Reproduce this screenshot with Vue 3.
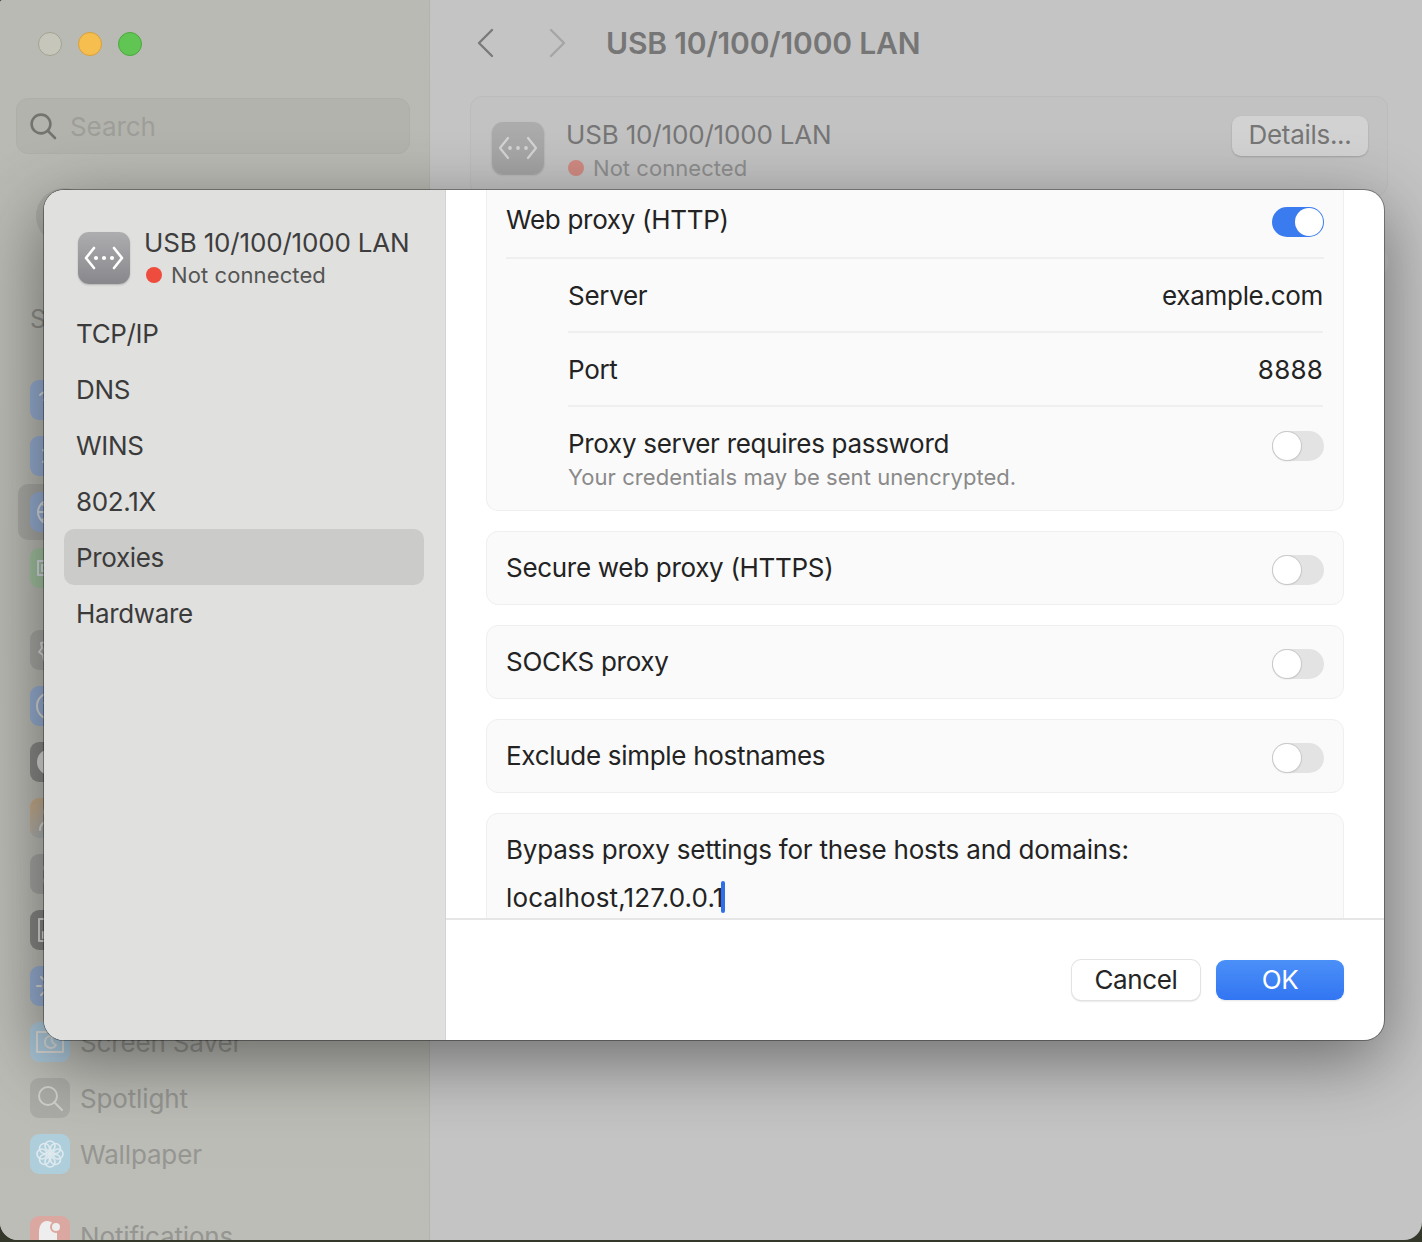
<script setup>
const group1 = [
  { label: 'Wi-Fi', color: '#94abce', d: 'M10 15a14 14 0 0 1 20 0M14 20a8 8 0 0 1 12 0M18 26a3 3 0 0 1 4 0' },
  { label: 'Bluetooth', color: '#94abce', d: 'M13 14l14 12-7 7V7l7 7-14 12' },
  { label: 'Network', color: '#94abce', selected: true, d: 'M8 20a12 12 0 1 0 24 0a12 12 0 1 0-24 0M14 10c5 6 5 14 0 20M8 20h24M12 12c6 4 12 4 16 0M12 28c6-4 12-4 16 0' },
  { label: 'VPN', color: '#a0bf9e', d: 'M8 13h24v14H8zM12 17h6v6h-6z' },
]
const group2 = [
  { label: 'General', color: '#a5a5a2', d: 'M20 8l3 3 5-1 1 5 4 3-3 4 1 5-5 1-3 4-4-3-5 1-1-5-4-3 3-4-1-5 5-1zM14 20a6 6 0 1 0 12 0a6 6 0 1 0-12 0' },
  { label: 'Accessibility', color: '#94abce', d: 'M7 20a13 13 0 1 0 26 0a13 13 0 1 0-26 0M14 17h12M20 17v6l-4 6M20 23l4 6' },
  { label: 'Appearance', color: '#878785', d: 'M8 20a12 12 0 1 0 24 0a12 12 0 1 0-24 0', fill: '#d8d8d6' },
  { label: 'Siri', color: '#b9ab94', grad: true, d: 'M14 14a5 5 0 1 0 10 0a5 5 0 1 0-10 0M10 32c0-12 18-12 18 0' },
  { label: 'Control Centre', color: '#a3a3a1', d: 'M14 14a5 5 0 1 0 10 0a5 5 0 1 0-10 0M14 27a5 5 0 1 0 10 0a5 5 0 1 0-10 0', fill: '#c8c8c6' },
  { label: 'Desktop', color: '#858583', d: 'M9 9h22v22H9zM13 22h7v6h-7z' },
  { label: 'Displays', color: '#94abce', d: 'M14 20a6 6 0 1 0 12 0a6 6 0 1 0-12 0M20 7v4M11 11l3 3M7 20h4M11 29l3-3' },
  { label: 'Screen Saver', color: '#a8c4d6', d: 'M7 10h26v20H7zM22 14a6 6 0 1 0 4 9a7 7 0 0 1-4-9' },
  { label: 'Spotlight', color: '#aaaaa7', stroke: '#cfcfcb', d: 'M9 18a9 9 0 1 0 18 0a9 9 0 1 0-18 0M24 24l8 8' },
  { label: 'Wallpaper', color: '#afcedb', petals: true },
]
const navItems = ['TCP/IP', 'DNS', 'WINS', '802.1X', 'Proxies', 'Hardware']
const simpleRows = ['Secure web proxy (HTTPS)', 'SOCKS proxy', 'Exclude simple hostnames']
</script>

<template>
  <div class="screen">
    <div class="window">
      <aside class="side">
        <div class="lights">
          <span class="light grey"></span>
          <span class="light yellow"></span>
          <span class="light green"></span>
        </div>
        <div class="search">
          <svg class="search-ico" width="28" height="28" viewBox="0 0 28 28" fill="none" stroke="#737370" stroke-width="2.6" stroke-linecap="round"><circle cx="12" cy="12" r="9.4"/><path d="M19 19l7 7"/></svg>
          <span>Search</span>
        </div>
        <div class="avatar-row"><span class="avatar"></span></div>
        <div class="sign">Sign in</div>
        <div class="group">
          <div v-for="g in group1" :key="g.label" class="side-row" :class="{ sel: g.selected }">
            <span class="side-ico" :style="{ background: g.color }">
              <svg width="40" height="40" viewBox="0 0 40 40" fill="none" stroke="#d3d9e0" stroke-width="2" stroke-linecap="round" stroke-linejoin="round"><path :d="g.d"/></svg>
            </span>
            <span>{{ g.label }}</span>
          </div>
        </div>
        <div class="group">
          <div v-for="g in group2" :key="g.label" class="side-row">
            <span class="side-ico" :class="{ siri: g.grad }" :style="g.grad ? null : { background: g.color }">
              <svg v-if="g.petals" width="30" height="30" viewBox="0 0 30 30" fill="none" stroke="#dfeaef" stroke-width="1.6"><circle cx="15" cy="7" r="5"/><circle cx="15" cy="23" r="5"/><circle cx="7" cy="15" r="5"/><circle cx="23" cy="15" r="5"/><circle cx="9.5" cy="9.5" r="5"/><circle cx="20.5" cy="9.5" r="5"/><circle cx="9.5" cy="20.5" r="5"/><circle cx="20.5" cy="20.5" r="5"/><circle cx="15" cy="15" r="1.4" fill="#dfeaef"/></svg>
              <svg v-else width="40" height="40" viewBox="0 0 40 40" :fill="g.fill || 'none'" :stroke="g.stroke || '#d6d6d4'" stroke-width="2" stroke-linecap="round" stroke-linejoin="round"><path :d="g.d"/></svg>
            </span>
            <span>{{ g.label }}</span>
          </div>
        </div>
        <div class="group">
          <div class="side-row">
            <span class="side-ico bell-ico">
              <svg width="40" height="40" viewBox="0 0 40 40" fill="#eee"><path d="M17 5c-6 0-8 6-8 11v20h18V16c0-6-4-11-10-11z"/><circle cx="26" cy="11" r="5" fill="#eee" stroke="#dba7a1" stroke-width="2"/></svg>
            </span>
            <span>Notifications</span>
          </div>
        </div>
      </aside>
      <main class="back">
        <div class="back-top">
          <svg width="20" height="32" viewBox="0 0 20 32" fill="none" stroke="#7a7a7a" stroke-width="2.4" stroke-linecap="round" stroke-linejoin="round"><path d="M17 3L4 16l13 13"/></svg>
          <svg class="fwd" width="20" height="32" viewBox="0 0 20 32" fill="none" stroke="#a5a5a5" stroke-width="2.4" stroke-linecap="round" stroke-linejoin="round"><path d="M3 3l13 13L3 29"/></svg>
          <h1>USB 10/100/1000 LAN</h1>
        </div>
        <section class="back-card">
          <span class="lan-ico dim">
            <svg width="40" height="26" viewBox="0 0 40 26" fill="none" stroke="#d4d4d4" stroke-width="2.2" stroke-linecap="round" stroke-linejoin="round"><path d="M10 3L2 13l8 10M30 3l8 10-8 10"/><circle cx="12" cy="13" r="1.9" fill="#d4d4d4" stroke="none"/><circle cx="20" cy="13" r="1.9" fill="#d4d4d4" stroke="none"/><circle cx="28" cy="13" r="1.9" fill="#d4d4d4" stroke="none"/></svg>
          </span>
          <div class="back-text">
            <div class="back-name">USB 10/100/1000 LAN</div>
            <div class="back-status"><i></i>Not connected</div>
          </div>
          <button class="details">Details...</button>
        </section>
        <div class="back-round"></div>
      </main>
    </div>

    <div class="modal">
      <nav class="m-side">
        <div class="m-head">
          <span class="lan-ico">
            <svg width="40" height="26" viewBox="0 0 40 26" fill="none" stroke="#fff" stroke-width="2.6" stroke-linecap="round" stroke-linejoin="round"><path d="M10 3L2 13l8 10M30 3l8 10-8 10"/><circle cx="12" cy="13" r="2.1" fill="#fff" stroke="none"/><circle cx="20" cy="13" r="2.1" fill="#fff" stroke="none"/><circle cx="28" cy="13" r="2.1" fill="#fff" stroke="none"/></svg>
          </span>
          <div>
            <div class="m-name">USB 10/100/1000 LAN</div>
            <div class="m-status"><i></i>Not connected</div>
          </div>
        </div>
        <div v-for="n in navItems" :key="n" class="m-nav" :class="{ active: n === 'Proxies' }">{{ n }}</div>
      </nav>
      <div class="m-main">
        <div class="scroll">
          <section class="card first">
            <div class="row top">
              <span>Web proxy (HTTP)</span>
              <span class="toggle on"></span>
            </div>
            <div class="sub">
              <div class="row line"><span>Server</span><span>example.com</span></div>
              <div class="row line"><span>Port</span><span class="num">8888</span></div>
              <div class="row pw">
                <div>
                  <div>Proxy server requires password</div>
                  <div class="hint">Your credentials may be sent unencrypted.</div>
                </div>
                <span class="toggle"></span>
              </div>
            </div>
          </section>
          <section v-for="r in simpleRows" :key="r" class="card simple">
            <span>{{ r }}</span>
            <span class="toggle"></span>
          </section>
          <section class="card bypass">
            <div class="bypass-title">Bypass proxy settings for these hosts and domains:</div>
            <div class="hosts">localhost,127.0.0.1<i class="caret"></i></div>
          </section>
        </div>
        <footer class="foot">
          <button class="btn">Cancel</button>
          <button class="btn ok">OK</button>
        </footer>
      </div>
    </div>
  </div>
</template>

<style>
html, body { margin: 0; padding: 0; background: #2c3024; }
</style>

<style scoped>
.screen {
  position: relative;
  width: 1422px;
  height: 1242px;
  overflow: hidden;
  background: #33382a;
  font-family: Inter, "Liberation Sans", sans-serif;
}
.window {
  display: flex;
  height: 1240px;
  border-radius: 3px 0 18px 18px;
  overflow: hidden;
  background: #c4c4c4;
}
.side {
  width: 430px;
  flex: none;
  box-sizing: border-box;
  height: 1240px;
  overflow: hidden;
  background: linear-gradient(180deg, #babab4 0%, #b7b8b1 50%, #bcbdb7 100%);
  border-right: 1px solid #b2b2ae;
}
.lights { display: flex; gap: 16px; padding: 32px 0 0 38px; }
.light { width: 24px; height: 24px; border-radius: 50%; box-sizing: border-box; }
.light.grey { background: #c6c6ba; border: 1px solid #a3a394; }
.light.yellow { background: #f6be4f; border: 1px solid #d9a036; }
.light.green { background: #61c554; border: 1px solid #4ba83f; }
.search {
  display: flex;
  align-items: center;
  gap: 13px;
  margin: 42px 19px 0 16px;
  height: 56px;
  box-sizing: border-box;
  padding-left: 12px;
  border: 1px solid #afafa9;
  border-radius: 12px;
  background: #b3b3ad;
  color: #9e9e99;
  font-size: 26px;
  letter-spacing: -0.1px;
}
.search-ico { flex: none; }
.avatar-row { height: 92px; padding: 34px 0 0 36px; box-sizing: border-box; }
.avatar { display: block; width: 56px; height: 56px; border-radius: 50%; background: #aaaaa5; }
.sign { height: 42px; margin-top: 58px; padding-left: 30px; color: #8d8d89; font-size: 25px; line-height: 30px; }
.group { padding: 26px 0 0 0; }
.side-row {
  display: flex;
  align-items: center;
  gap: 10px;
  height: 56px;
  margin: 0 18px;
  padding-left: 12px;
  color: #959591;
  font-size: 26px;
  letter-spacing: -0.15px;
  border-radius: 10px;
}
.side-row.sel { background: #a6a6a2; }
.side-ico {
  width: 40px;
  height: 40px;
  flex: none;
  border-radius: 9px;
  display: flex;
  align-items: center;
  justify-content: center;
  overflow: hidden;
}
.siri { background: linear-gradient(135deg, #c8a881, #98b4cc); }
.bell-ico { background: #dba7a1; }
.back { flex: 1; min-width: 0; padding: 0 34px 0 40px; }
.back-top { display: flex; align-items: center; height: 86px; padding-left: 5px; }
.fwd { margin-left: 53px; }
.back-top h1 {
  margin: 0 0 0 38px;
  font-size: 30px;
  font-weight: 600;
  color: #767676;
  letter-spacing: -0.17px;
}
.back-card {
  display: flex;
  align-items: flex-start;
  margin-top: 10px;
  height: 100px;
  box-sizing: border-box;
  padding: 19px 19px 0 21px;
  border: 1px solid #bcbcbc;
  border-radius: 12px;
  background: #c2c2c2;
}
.back-round {
  width: 40px;
  height: 40px;
  margin: 46px 0 0 auto;
  border-radius: 50%;
  background: #cacaca;
}
.lan-ico {
  width: 52px;
  height: 52px;
  flex: none;
  display: flex;
  align-items: center;
  justify-content: center;
  border-radius: 11px;
  background: linear-gradient(180deg, #adadb0, #88888c);
  box-shadow: 0 1px 2px rgba(0,0,0,.2);
}
.lan-ico.dim { background: linear-gradient(180deg, #acacac, #a2a2a2); margin-top: 6px; }
.back-text { margin-left: 22px; flex: 1; padding-top: 1px; }
.back-name { font-size: 26px; line-height: 36px; color: #767676; letter-spacing: -0.17px; }
.back-status { display: flex; align-items: center; font-size: 22px; line-height: 30px; color: #8e8e8e; letter-spacing: 0.05px; }
.back-status i { width: 16px; height: 16px; border-radius: 50%; background: #cf8a82; margin: 0 9px 0 2px; }
.details {
  width: 136px;
  height: 40px;
  border: 0;
  border-radius: 9px;
  background: #d2d2d2;
  box-shadow: 0 1px 2px rgba(0,0,0,.18);
  color: #767676;
  font: 26px Inter, "Liberation Sans", sans-serif;
  letter-spacing: -0.3px;
  padding: 0 0 3px;
}
.modal {
  position: absolute;
  left: 44px;
  top: 190px;
  width: 1340px;
  height: 850px;
  display: flex;
  border-radius: 20px;
  overflow: hidden;
  background: #fff;
  box-shadow: 0 0 0 1px rgba(0,0,0,.34), 0 20px 70px rgba(0,0,0,.45);
}
.m-side {
  width: 402px;
  flex: none;
  box-sizing: border-box;
  padding: 0 21px 0 20px;
  background: #e0e0de;
  border-right: 1px solid #d3d3d1;
}
.m-head { display: flex; height: 115px; padding: 36px 0 0 14px; box-sizing: border-box; }
.m-head .lan-ico { margin: 6px 14px 0 0; }
.m-name { font-size: 26px; line-height: 34px; color: #3d3d3d; letter-spacing: -0.17px; white-space: nowrap; }
.m-status { display: flex; align-items: center; font-size: 22px; line-height: 30px; color: #555; letter-spacing: 0.1px; }
.m-status i { width: 16px; height: 16px; border-radius: 50%; background: #ee4c3c; margin: 0 9px 0 2px; }
.m-nav {
  display: flex;
  align-items: center;
  height: 56px;
  padding-left: 12px;
  border-radius: 10px;
  font-size: 26px;
  color: #3b3b3b;
  letter-spacing: -0.35px;
}
.m-nav.active { background: #cbcbc9; }
.m-main { flex: 1; min-width: 0; display: flex; flex-direction: column; }
.scroll {
  flex: 1;
  min-height: 0;
  overflow: hidden;
  padding: 0 40px;
  border-bottom: 2px solid #e6e6e6;
  color: #232323;
  font-size: 26px;
  letter-spacing: -0.3px;
}
.card {
  box-sizing: border-box;
  background: #fafafa;
  border: 1px solid #efefef;
  border-radius: 12px;
  margin-bottom: 20px;
  padding: 0 19px;
}
.card.first { border-top: 0; border-top-left-radius: 0; border-top-right-radius: 0; height: 321px; }
.row { display: flex; align-items: center; justify-content: space-between; }
.row.top { height: 69px; padding-bottom: 8px; box-sizing: border-box; border-bottom: 2px solid #efefef; }
.sub { padding-left: 62px; }
.row.line { height: 74px; margin-right: 1px; border-bottom: 2px solid #efefef; box-sizing: border-box; }
.num { letter-spacing: 0.2px; }
.row.pw { height: 104px; padding-top: 2px; box-sizing: border-box; }
.hint { font-size: 22px; color: #8a8a8a; line-height: 30px; letter-spacing: 0.05px; margin-top: 3px; }
.toggle {
  flex: none;
  position: relative;
  width: 52px;
  height: 30px;
  margin-top: 4px;
  border-radius: 15px;
  background: #e3e3e3;
}
.row.pw .toggle { align-self: flex-start; margin-top: 22px; }
.toggle::after {
  content: "";
  position: absolute;
  left: 1px;
  top: 1px;
  width: 28px;
  height: 28px;
  border-radius: 50%;
  background: #fff;
  box-shadow: 0 0 0 1px #c9c9c9, 0 1px 2px rgba(0,0,0,.15);
}
.toggle.on { background: #3a7bf0; }
.toggle.on::after { left: 23px; box-shadow: none; }
.card.simple { display: flex; align-items: center; justify-content: space-between; height: 74px; padding-bottom: 2px; }
.card.simple .toggle { margin-top: 6px; }
.card.bypass { height: 140px; padding-top: 20px; margin-bottom: 0; }
.bypass-title { letter-spacing: -0.21px; }
.hosts { margin-top: 16px; display: flex; align-items: center; letter-spacing: 0.12px; }
.caret { width: 4px; height: 32px; background: #2f6fe8; border-radius: 2px; margin-left: -2px; }
.foot {
  height: 120px;
  flex: none;
  box-sizing: border-box;
  display: flex;
  justify-content: flex-end;
  gap: 16px;
  padding: 40px 40px 0 0;
}
.btn {
  width: 128px;
  height: 40px;
  padding: 0 0 2px;
  border: 0;
  border-radius: 9px;
  background: #fff;
  box-shadow: 0 0 0 1px #e3e3e3, 0 1px 2px rgba(0,0,0,.25);
  color: #252525;
  font: 26px Inter, "Liberation Sans", sans-serif;
  letter-spacing: -0.35px;
}
.btn.ok {
  background: linear-gradient(180deg, #4b90f8, #3275f2);
  box-shadow: 0 1px 2px rgba(0,0,0,.1);
  color: #fff;
}
</style>
